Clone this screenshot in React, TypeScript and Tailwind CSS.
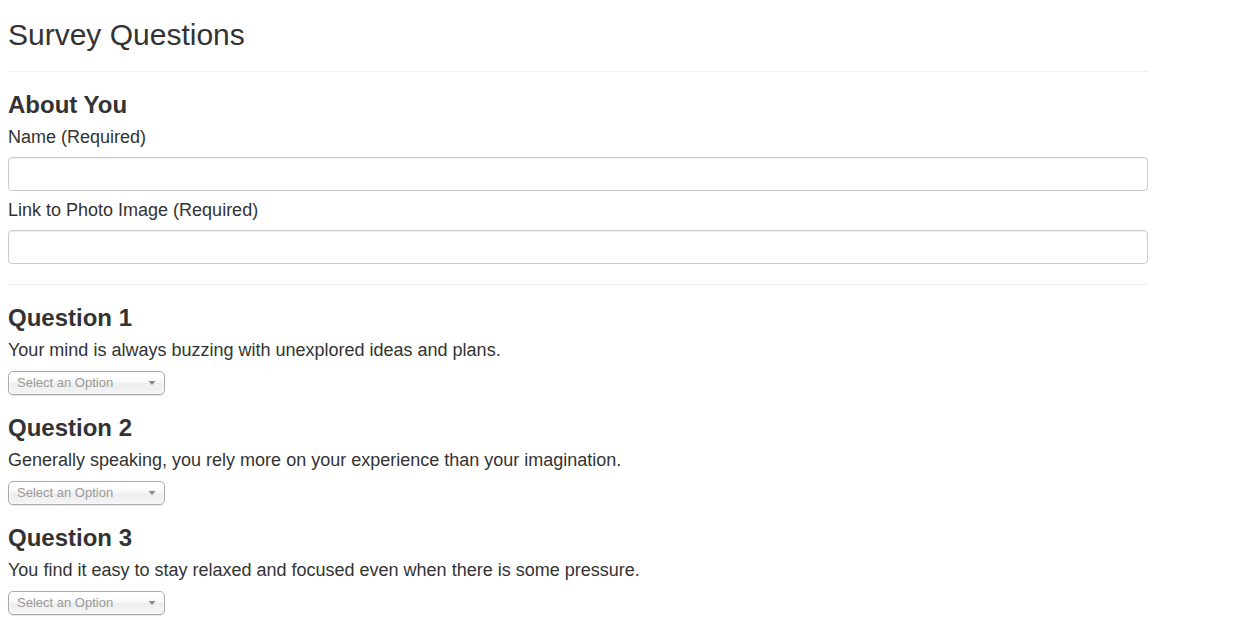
import React from 'react';

const QUESTIONS = [
  'Your mind is always buzzing with unexplored ideas and plans.',
  'Generally speaking, you rely more on your experience than your imagination.',
  'You find it easy to stay relaxed and focused even when there is some pressure.',
];

const ChosenSelect: React.FC = () => (
  <div className="mt-[8px] relative w-[157px] h-[24px] rounded-[5px] border border-[#aaa] bg-[linear-gradient(#fff_20%,#f6f6f6_50%,#eee_52%,#f4f4f4_100%)] shadow-[inset_0_0_3px_#fff,0_1px_1px_rgba(0,0,0,0.1)] pl-[8px] text-[13px] leading-[22px] text-[#999]">
    Select an Option
    <svg className="absolute right-[8px] top-[8px]" width="8" height="6" viewBox="0 0 8 6">
      <polygon points="0.5,1 7.5,1 4,5" fill="#888" />
    </svg>
  </div>
);

const TextInput: React.FC = () => (
  <input
    type="text"
    className="mt-[7px] block w-full h-[34px] rounded-[4px] border border-[#ccc] bg-white px-3 text-[14px] shadow-[inset_0_1px_1px_rgba(0,0,0,0.075)] outline-none"
  />
);

export default function App() {
  return (
    <div className="min-h-screen bg-white font-['Liberation_Sans',Arial,sans-serif] text-[#333]">
      <div className="w-[1140px] ml-[8px] pb-[5px]">
        <h1 className="pt-[18px] text-[30px] leading-[33px] font-normal">Survey Questions</h1>
        <hr className="mt-[20px] border-0 border-t border-[#eee]" />

        <h3 className="mt-[20px] text-[24px] leading-[26px] font-bold">About You</h3>
        <label className="mt-[6px] block text-[18px] leading-[26px]">Name (Required)</label>
        <TextInput />
        <label className="mt-[6px] block text-[18px] leading-[26px]">Link to Photo Image (Required)</label>
        <TextInput />

        <hr className="mt-[20px] border-0 border-t border-[#eee]" />

        {QUESTIONS.map((q, i) => (
          <div key={i} className="mt-[20px]">
            <h3 className="text-[24px] leading-[26px] font-bold">Question {i + 1}</h3>
            <p className="mt-[6px] text-[18px] leading-[26px]">{q}</p>
            <ChosenSelect />
          </div>
        ))}
      </div>
    </div>
  );
}
